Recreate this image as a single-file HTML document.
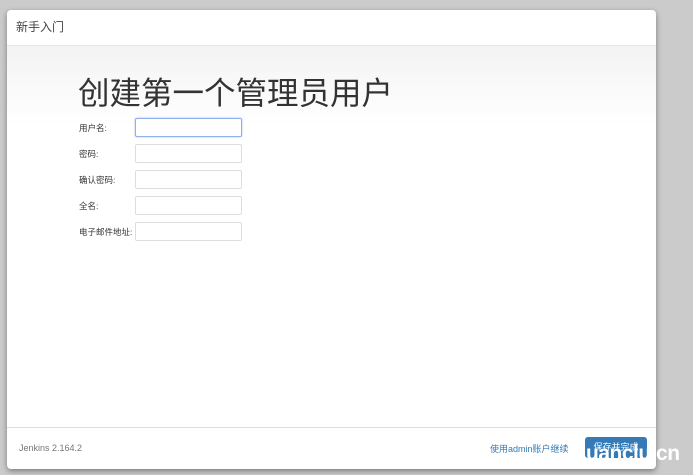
<!DOCTYPE html>
<html><head><meta charset="utf-8"><style>
body{margin:0;width:693px;height:475px;background:#cbcbcb;position:relative;overflow:hidden;font-family:"Liberation Sans","Noto Sans CJK SC",sans-serif;}
.dlg{position:absolute;left:7px;top:10px;width:649px;height:459px;background:#fff;border-radius:4px;box-shadow:0 2px 6px rgba(0,0,0,.4);overflow:hidden;}
.hd{height:35px;border-bottom:1px solid #e5e5e5;font-size:12px;color:#444;line-height:34px;padding-left:9px;}
.body{position:absolute;top:36px;left:0;right:0;height:381px;background:linear-gradient(#f3f3f3,#fff 80px);}
h1{position:absolute;left:71px;top:22px;margin:0;font-weight:normal;font-size:31.5px;color:#333;}
.lab{position:absolute;left:72px;font-size:8.5px;color:#333;}
.in{position:absolute;left:128px;width:105px;height:17px;border:1px solid #ddd;border-radius:2px;background:#fff;}
.ft{position:absolute;top:417px;left:0;right:0;bottom:0;border-top:1px solid #ddd;}
.ver{position:absolute;left:12px;top:15px;font-size:9px;color:#777;}
.lnk{position:absolute;left:483px;top:14px;font-size:9px;color:#337ab7;}
.btn{position:absolute;left:578px;top:9px;width:62px;height:21px;background:#337ab7;border-radius:3px;color:#fff;font-size:9px;text-align:center;line-height:21px;}
.wm{position:absolute;left:586px;top:442px;font-size:21px;font-weight:bold;color:#fff;letter-spacing:-0.5px;}
</style></head><body>
<div class="dlg">
<div class="hd">新手入门</div>
<div class="body">
<h1>创建第一个管理员用户</h1>
<div class="lab" style="top:76px">用户名:</div><div class="in" style="top:72px;border-color:#8fb0ea;box-shadow:0 0 2px #aac4f0"></div>
<div class="lab" style="top:102px">密码:</div><div class="in" style="top:98px"></div>
<div class="lab" style="top:128px">确认密码:</div><div class="in" style="top:124px"></div>
<div class="lab" style="top:154px">全名:</div><div class="in" style="top:150px"></div>
<div class="lab" style="top:180px">电子邮件地址:</div><div class="in" style="top:176px"></div>
</div>
<div class="ft"><div class="ver">Jenkins 2.164.2</div><div class="lnk">使用admin账户继续</div><div class="btn">保存并完成</div></div>
</div>
<div class="wm">uanclu.cn</div>
</body></html>
